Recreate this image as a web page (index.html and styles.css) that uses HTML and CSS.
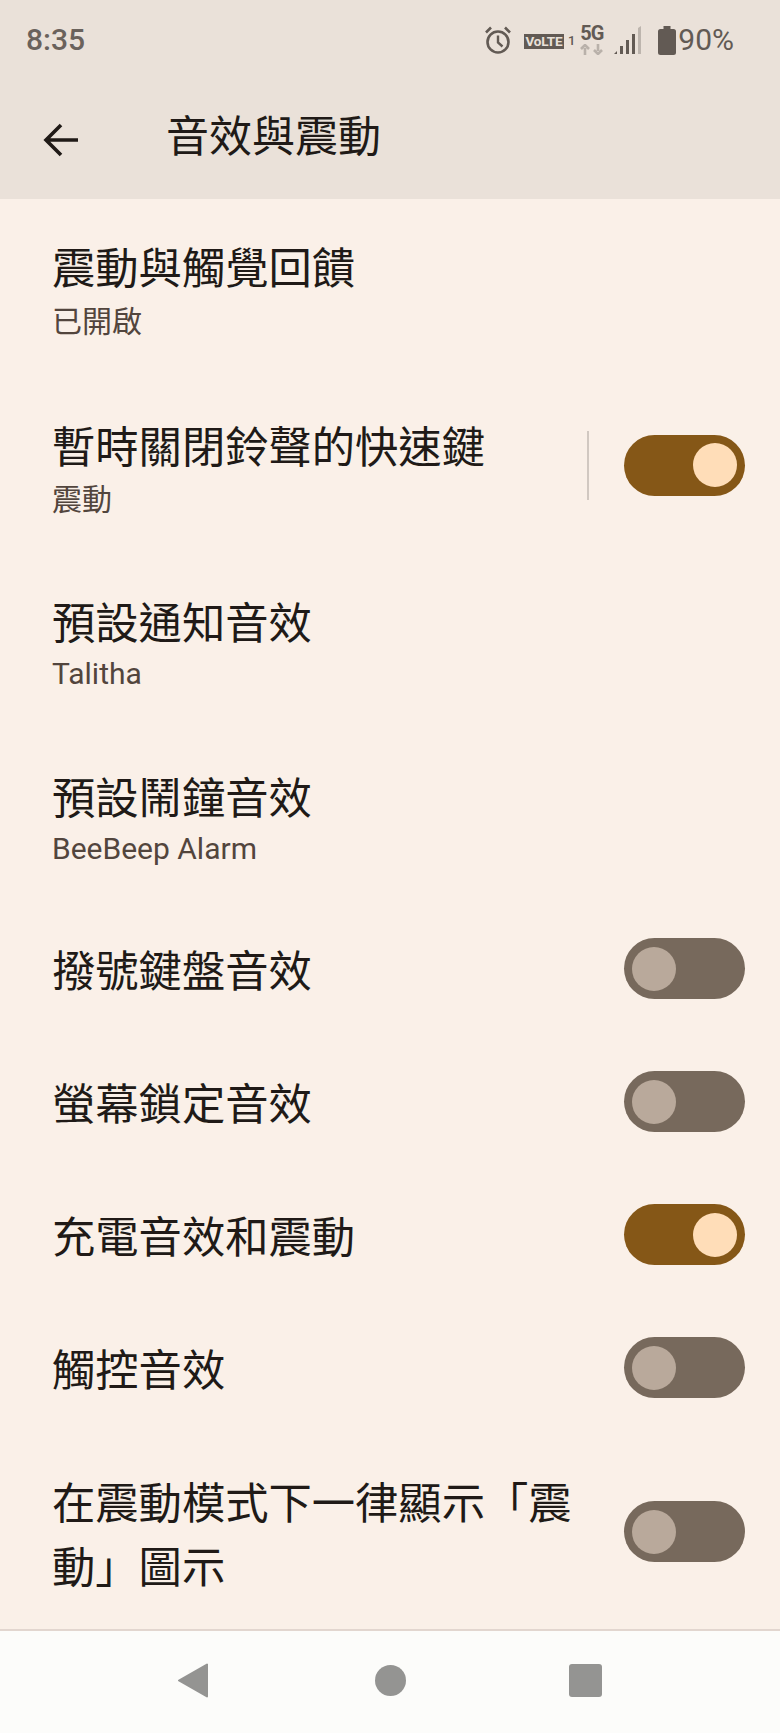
FILE: index.html
```html
<!DOCTYPE html>
<html lang="zh-Hant">
<head>
    <meta charset="UTF-8">
    <meta name="viewport" content="width=device-width, initial-scale=1.0">
    <title>音效與震動</title>
    <link rel="stylesheet" href="styles.css">
</head>
<body>
    <header class="top">
        <div class="status">
            <span class="clock">8:35</span>
            <div class="status-icons">
                <svg class="ic-alarm" width="28" height="28" viewBox="0 0 28 28">
                    <circle cx="14" cy="16" r="10.5" fill="none" stroke="#625A54" stroke-width="2.6"/>
                    <path d="M14 9.5V16.5L18.5 20.5" fill="none" stroke="#625A54" stroke-width="2.4"/>
                    <path d="M2 6.5L7 1.5M26 6.5L21 1.5" fill="none" stroke="#625A54" stroke-width="2.6"/>
                </svg>
                <span class="volte">VoLTE</span>
                <span class="sim">1</span>
                <div class="fiveg">
                    <span class="fiveg-text">5G</span>
                    <svg width="23" height="11" viewBox="0 0 23 11">
                        <path d="M5 11V4M1 5L5 1L9 5M18 0V7M14 6L18 10L22 6" fill="none" stroke="#B9B1AA" stroke-width="2.6"/>
                    </svg>
                </div>
                <svg class="ic-signal" width="27" height="28" viewBox="0 0 27 28">
                    <path d="M0 28L3 25V28Z" fill="#625A54"/>
                    <rect x="6" y="20" width="3" height="8" fill="#625A54"/>
                    <rect x="12" y="14" width="3" height="14" fill="#625A54"/>
                    <rect x="18" y="8" width="3" height="20" fill="#625A54"/>
                    <path d="M24 2L27 0V28H24Z" fill="#BDB5AE"/>
                </svg>
                <svg class="ic-battery" width="18" height="29" viewBox="0 0 18 29">
                    <path d="M5.5 0H12.5V3H15.5Q18 3 18 5.500V26.500Q18 29 15.500 29H2.500Q0 29 0 26.500V5.500Q0 3 2.500 3H5.500Z" fill="#625A54"/>
                </svg>
                <span class="battery-text">90%</span>
            </div>
        </div>
        <div class="toolbar">
            <svg class="ic-back" width="36" height="34" viewBox="0 0 36 34">
                <path d="M35 17H3M18 2L3 17L18 32" fill="none" stroke="#201A17" stroke-width="3.6"/>
            </svg>
            <h1 class="page-title">音效與震動</h1>
        </div>
    </header>

    <main class="list">
        <div class="row row-first">
            <div class="row-text">
                <div class="row-title">震動與觸覺回饋</div>
                <div class="row-sub">已開啟</div>
            </div>
        </div>
        <div class="row row-second">
            <div class="row-text">
                <div class="row-title">暫時關閉鈴聲的快速鍵</div>
                <div class="row-sub">震動</div>
            </div>
            <span class="divider"></span>
            <span class="switch on"><span class="thumb"></span></span>
        </div>
        <div class="row row-latin">
            <div class="row-text">
                <div class="row-title">預設通知音效</div>
                <div class="row-sub">Talitha</div>
            </div>
        </div>
        <div class="row row-latin row-latin-last">
            <div class="row-text">
                <div class="row-title">預設鬧鐘音效</div>
                <div class="row-sub">BeeBeep Alarm</div>
            </div>
        </div>
        <div class="row">
            <div class="row-text"><div class="row-title">撥號鍵盤音效</div></div>
            <span class="switch"><span class="thumb"></span></span>
        </div>
        <div class="row">
            <div class="row-text"><div class="row-title">螢幕鎖定音效</div></div>
            <span class="switch"><span class="thumb"></span></span>
        </div>
        <div class="row">
            <div class="row-text"><div class="row-title">充電音效和震動</div></div>
            <span class="switch on"><span class="thumb"></span></span>
        </div>
        <div class="row">
            <div class="row-text"><div class="row-title">觸控音效</div></div>
            <span class="switch"><span class="thumb"></span></span>
        </div>
        <div class="row row-last">
            <div class="row-text"><div class="row-title">在震動模式下一律顯示「震動」圖示</div></div>
            <span class="switch"><span class="thumb"></span></span>
        </div>
    </main>

    <footer class="nav">
        <svg width="30" height="35" viewBox="0 0 30 35">
            <path d="M29 1.500V33.500L1 17.500Z" fill="#949492" stroke="#949492" stroke-width="2" stroke-linejoin="round"/>
        </svg>
        <span class="nav-home"></span>
        <span class="nav-recent"></span>
    </footer>
</body>
</html>
```

FILE: styles.css
```css
body {
    display: flex;
    flex-direction: column;
    height: 1733px;
    margin: 0;
    background-color: #FAF0E8;
    color: #201A17;
    font-family: "Noto Sans CJK TC", Roboto, sans-serif;
    overflow: hidden;
}
.top {
    flex: none;
    height: 199px;
    background-color: #EAE1D9;
}
.status {
    display: flex;
    justify-content: space-between;
    align-items: center;
    height: 80px;
    padding: 0 46px 0 26px;
    color: #625A54;
    font-family: Roboto, sans-serif;
}
.clock {
    margin-bottom: 2px;
    color: #6A625C;
    font-size: 30px;
    font-weight: 500;
}
.status-icons {
    display: flex;
    align-items: center;
}
.volte {
    margin-left: 12px;
    margin-top: 3px;
    width: 40px;
    height: 15px;
    background-color: #625A54;
    color: #EAE1D9;
    font-size: 13.500px;
    font-weight: 700;
    line-height: 15px;
    text-align: center;
    letter-spacing: -0.200px;
}
.sim {
    margin-left: 4px;
    margin-top: 1px;
    font-size: 13px;
    font-weight: 500;
}
.fiveg {
    display: flex;
    flex-direction: column;
    margin-left: 5px;
    width: 23px;
}
.fiveg-text {
    font-size: 20px;
    font-weight: 700;
    line-height: 17px;
    letter-spacing: -1px;
    margin-bottom: 2px;
}
.ic-signal {
    margin-left: 11px;
}
.ic-battery {
    margin-left: 17px;
}
.battery-text {
    margin-left: 2px;
    margin-bottom: 2px;
    font-size: 30px;
}
.toolbar {
    display: flex;
    align-items: center;
    height: 119px;
    padding-left: 43px;
}
.ic-back {
    flex: none;
}
.page-title {
    margin: 0 0 12px 87px;
    font-size: 43px;
    font-weight: 400;
    line-height: 63px;
}
.list {
    flex: 1;
    min-height: 0;
}
.row {
    display: flex;
    align-items: center;
    box-sizing: border-box;
    min-height: 133px;
    padding: 33.500px 35px 33.500px 52px;
}
.row-first {
    padding-top: 35px;
    padding-bottom: 34.500px;
}
.row-first .row-sub {
    margin-top: 2px;
}
.row-second {
    padding-bottom: 32.500px;
}
.row-second .row-sub {
    margin-top: 1px;
}
.row-latin {
    padding-bottom: 34.500px;
}
.row-latin-last {
    padding-bottom: 31px;
}
.row-last {
    padding-bottom: 27px;
}
.row-text {
    flex: 1;
    padding-right: 40px;
}
.row-title {
    font-size: 43.300px;
    line-height: 63px;
}
.row-last .row-title {
    line-height: 64px;
}
.row-sub {
    color: #52453D;
    font-family: Roboto, "Noto Sans CJK TC", sans-serif;
    font-size: 30px;
    line-height: 46px;
}
.row-latin .row-sub {
    line-height: 44px;
}
.divider {
    width: 2px;
    height: 69px;
    margin-right: 35px;
    margin-bottom: 6px;
    background-color: #D1C8C1;
}
.switch {
    display: flex;
    align-items: center;
    flex: none;
    box-sizing: border-box;
    width: 121px;
    height: 61px;
    padding: 0 8px;
    border-radius: 31px;
    background-color: #77695C;
}
.row-second .switch {
    margin-bottom: 6px;
}
.thumb {
    width: 44px;
    height: 44px;
    border-radius: 50%;
    background-color: #B9A99B;
}
.switch.on {
    justify-content: flex-end;
    background-color: #855717;
}
.switch.on .thumb {
    background-color: #FFDDB8;
}
.nav {
    display: flex;
    align-items: center;
    flex: none;
    box-sizing: border-box;
    height: 104px;
    padding: 0 178px 4px 178px;
    justify-content: space-between;
    border-top: 2px solid #E2D6CF;
    background-color: #FCFCFA;
}
.nav-home {
    width: 31px;
    height: 31px;
    margin-left: 4px;
    border-radius: 50%;
    background-color: #949492;
}
.nav-recent {
    width: 33px;
    height: 33px;
    border-radius: 3px;
    background-color: #949492;
}
```
